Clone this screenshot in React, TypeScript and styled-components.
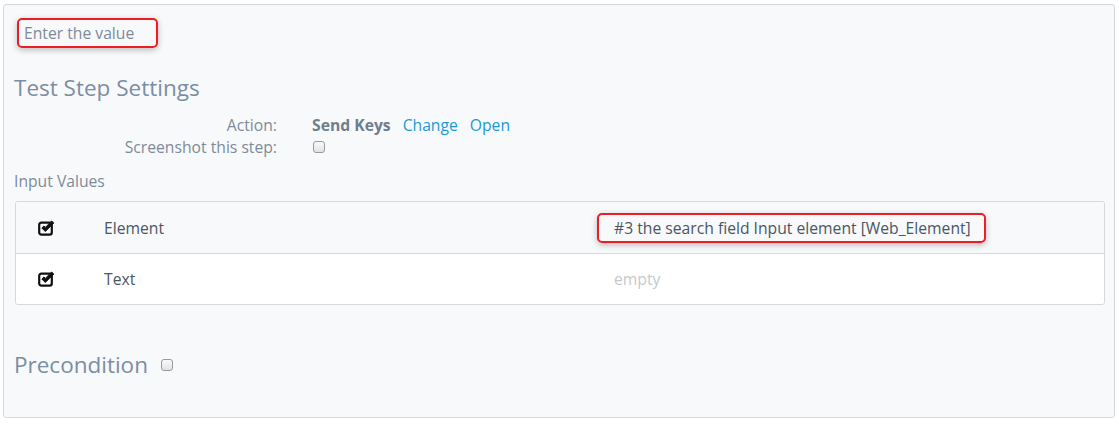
import React from "react";
import styled, { createGlobalStyle } from "styled-components";

const Global = createGlobalStyle`
  html, body { margin: 0; padding: 0; background: #ffffff; }
  body { font-family: "Open Sans", "Liberation Sans", sans-serif; }
`;

const Page = styled.div`
  padding: 4px 4px 0 3px;
  width: 1112px;
`;

const Panel = styled.div`
  box-sizing: border-box;
  width: 1112px;
  height: 414px;
  background: #f8f9fb;
  border: 1px solid #d6d8da;
  border-radius: 3px;
  padding: 13px 10px 0 10px;
  display: flex;
  flex-direction: column;
`;

const Highlight = styled.div<{ $w: number }>`
  box-sizing: border-box;
  width: ${(p) => p.$w}px;
  height: 30px;
  border: 2px solid #ee1c25;
  border-radius: 5px;
  box-shadow: 0 2px 6px rgba(0, 0, 0, 0.25);
  display: flex;
  align-items: center;
  padding-left: 15px;
`;

const Hint = styled(Highlight)`
  margin-left: 3px;
  padding-left: 5px;
  font-size: 15.7px;
  color: #7d8b99;
`;

const Heading = styled.h2<{ $top: number }>`
  margin: ${(p) => p.$top}px 0 0 0;
  font-size: 22.5px;
  font-weight: 400;
  color: #7b8ea3;
  line-height: 30px;
  display: flex;
  align-items: center;
  gap: 12px;
`;

const Form = styled.div`
  margin-top: 11px;
  display: grid;
  grid-template-columns: 263px auto;
  column-gap: 35px;
  font-size: 15.7px;
  line-height: 22px;
`;

const Label = styled.div`
  text-align: right;
  color: #7d8b99;
`;

const Value = styled.div`
  display: flex;
  align-items: center;
  gap: 12px;
  color: #7d8b99;
`;

const Strong = styled.span`
  font-weight: 700;
  color: #6f7e8d;
`;

const Link = styled.a`
  color: #1a9ad6;
  text-decoration: none;
`;

const Box = styled.span<{ $size: number }>`
  box-sizing: border-box;
  display: inline-block;
  width: ${(p) => p.$size}px;
  height: ${(p) => p.$size}px;
  margin-left: 1px;
  border: 1px solid #9a9a9a;
  border-radius: 3px;
  background: linear-gradient(#fafafa, #e2e2e2);
`;

const SubHeading = styled.div`
  margin-top: 12px;
  font-size: 15.7px;
  line-height: 22px;
  color: #7d8b99;
`;

const Table = styled.div`
  margin: 9px 0 0 1px;
  width: 1090px;
  box-sizing: border-box;
  border: 1px solid #d6d8da;
  border-radius: 3px;
  overflow: hidden;
`;

const Row = styled.div<{ $alt?: boolean }>`
  height: 51px;
  display: grid;
  grid-template-columns: 88px 510px 1fr;
  align-items: center;
  background: ${(p) => (p.$alt ? "#ffffff" : "#f8f9fb")};
  border-top: ${(p) => (p.$alt ? "1px solid #d6d8da" : "none")};
  box-sizing: border-box;
  font-size: 15.7px;
  color: #4b5663;
`;

const IconCell = styled.div`
  padding-left: 22px;
  display: flex;
  align-items: center;
`;

const ValueCell = styled.div<{ $empty?: boolean }>`
  color: ${(p) => (p.$empty ? "#c6c9cc" : "#4b5663")};
  margin-left: ${(p) => (p.$empty ? "0" : "-17px")};
`;

const CheckIcon = () => (
  <svg width="17" height="16" viewBox="0 0 17 16">
    <rect x="1.2" y="2.7" width="12.6" height="12" rx="2.2" fill="none" stroke="#111" strokeWidth="2.2" />
    <path d="M3.8 8 L7.3 11.5 L15.8 3 L13.7 1 L7.3 7.4 L5.9 6 Z" fill="#111" stroke="#111" strokeWidth="1" strokeLinejoin="round" />
  </svg>
);

export default function App() {
  return (
    <>
      <Global />
      <Page>
        <Panel>
          <Hint $w={141}>Enter the value</Hint>
          <Heading $top={25}>Test Step Settings</Heading>
          <Form>
            <Label>Action:</Label>
            <Value>
              <Strong>Send Keys</Strong>
              <Link href="#">Change</Link>
              <Link href="#">Open</Link>
            </Value>
            <Label>Screenshot this step:</Label>
            <Value>
              <Box $size={12} />
            </Value>
          </Form>
          <SubHeading>Input Values</SubHeading>
          <Table>
            <Row>
              <IconCell>
                <CheckIcon />
              </IconCell>
              <div>Element</div>
              <ValueCell>
                <Highlight $w={389}>#3 the search field Input element [Web_Element]</Highlight>
              </ValueCell>
            </Row>
            <Row $alt>
              <IconCell>
                <CheckIcon />
              </IconCell>
              <div>Text</div>
              <ValueCell $empty>empty</ValueCell>
            </Row>
          </Table>
          <Heading $top={45}>
            Precondition <Box $size={12} />
          </Heading>
        </Panel>
      </Page>
    </>
  );
}
